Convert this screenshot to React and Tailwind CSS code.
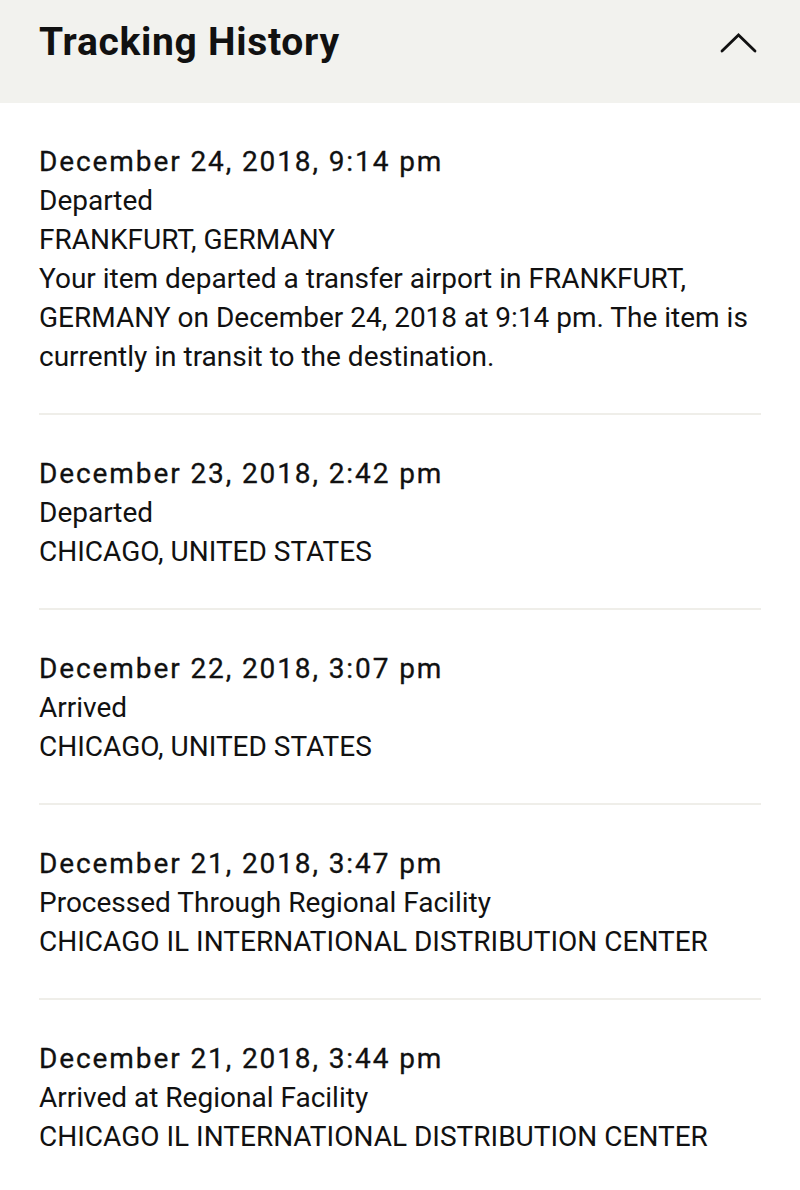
import React from "react";

const events = [
  {
    date: "December 24, 2018, 9:14 pm",
    status: "Departed",
    place: "FRANKFURT, GERMANY",
    details: [
      "Your item departed a transfer airport in FRANKFURT,",
      "GERMANY on December 24, 2018 at 9:14 pm. The item is",
      "currently in transit to the destination.",
    ],
  },
  {
    date: "December 23, 2018, 2:42 pm",
    status: "Departed",
    place: "CHICAGO, UNITED STATES",
  },
  {
    date: "December 22, 2018, 3:07 pm",
    status: "Arrived",
    place: "CHICAGO, UNITED STATES",
  },
  {
    date: "December 21, 2018, 3:47 pm",
    status: "Processed Through Regional Facility",
    place: "CHICAGO IL INTERNATIONAL DISTRIBUTION CENTER",
  },
  {
    date: "December 21, 2018, 3:44 pm",
    status: "Arrived at Regional Facility",
    place: "CHICAGO IL INTERNATIONAL DISTRIBUTION CENTER",
  },
];

const App = () => {
  return (
    <div className="w-[800px] h-[1190px] bg-white text-[#111] font-['Roboto','Liberation_Sans',Arial,sans-serif] overflow-hidden">
      <div className="h-[103px] bg-[#f2f2ee] flex items-center justify-between pl-[39px] pr-[43px]">
        <h1 className="text-[39px] font-bold tracking-[0.7px] leading-none -mt-[18px]">
          Tracking History
        </h1>
        <svg
          width="37"
          height="21"
          viewBox="0 0 37 21"
          fill="none"
          stroke="#111"
          strokeWidth="2.8"
          strokeLinecap="round"
          strokeLinejoin="miter"
          className="-mt-[19px]"
        >
          <path d="M2 19 L18.5 3 L35 19" />
        </svg>
      </div>

      <div className="px-[39px] pt-[39px]">
        {events.map((ev, i) => (
          <div key={i}>
            {i > 0 && <div className="h-[2px] bg-[#efeee9]" />}
            <div
              className={`text-[28px] leading-[39px] ${
                i > 0 ? "pt-[39px]" : ""
              } pb-[37px]`}
            >
              <p className="tracking-[1.9px] [-webkit-text-stroke:0.3px_#111]">
                {ev.date}
              </p>
              <p>{ev.status}</p>
              <p>{ev.place}</p>
              {ev.details && (
                <p>
                  {ev.details.map((line, j) => (
                    <span key={j} className="block">
                      {line}
                    </span>
                  ))}
                </p>
              )}
            </div>
          </div>
        ))}
      </div>
    </div>
  );
};

export default App;
